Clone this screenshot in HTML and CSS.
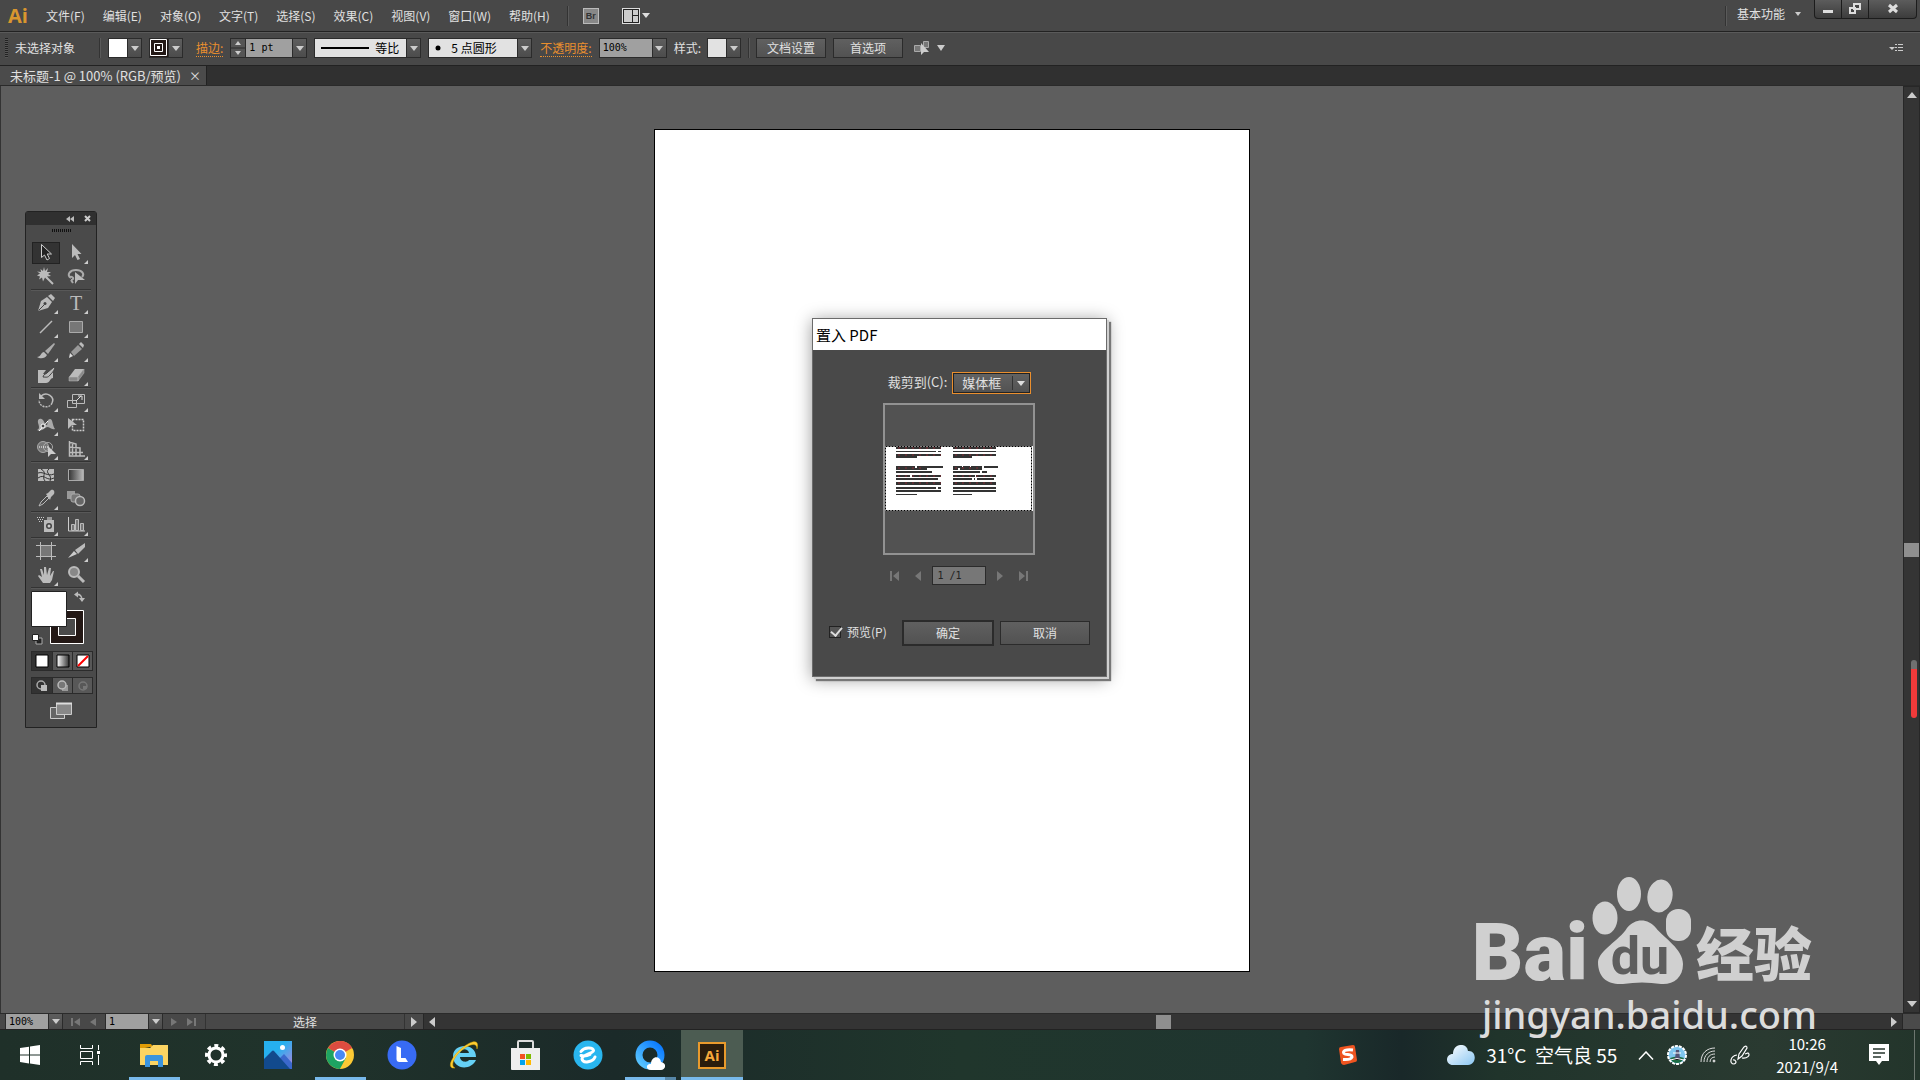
FILE: index.html
```html
<!DOCTYPE html>
<html lang="zh-CN">
<head>
    <meta charset="UTF-8">
    <meta name="viewport" content="width=device-width, initial-scale=1.0">
    <title>未标题-1 @ 100% (RGB/预览)</title>
    <link rel="stylesheet" href="styles.css">
</head>
<body>

    <!-- menu bar -->
    <header class="menubar">
        <span class="ai-logo">Ai</span>
        <nav class="menus">
            <button>文件(F)</button>
            <button>编辑(E)</button>
            <button>对象(O)</button>
            <button>文字(T)</button>
            <button>选择(S)</button>
            <button>效果(C)</button>
            <button>视图(V)</button>
            <button>窗口(W)</button>
            <button>帮助(H)</button>
        </nav>
        <span class="sep"></span>
        <button class="bridge" aria-label="Bridge">Br</button>
        <button class="arrange" aria-label="排列文档">
            <svg width="28" height="16" viewBox="0 0 28 16"><rect x="1" y="1" width="16" height="14" fill="#ccc" stroke="#222"/><path d="M0 .5h18M.5 0v16M17.500 0v16M0 15.500h18" stroke="#ddd"/><path d="M1.500 1.500h15v13h-15zM10.500 1v14M11 7.500h6" fill="none" stroke="#222"/><path d="M20 5h8l-4 5z" fill="#ddd"/></svg>
        </button>
        <span class="sep push"></span>
        <button class="workspace">基本功能 <svg width="6" height="4" viewBox="0 0 6 4"><path d="M0 0h6l-3 4z" fill="#ccc"/></svg></button>
        <div class="window-buttons">
            <button aria-label="最小化"><svg width="12" height="16" viewBox="0 0 12 16"><path d="M1 10h10v3h-10z" fill="#ddd"/></svg></button>
            <button aria-label="还原"><svg width="12" height="16" viewBox="0 0 12 16"><path d="M5 4h6v5h-6z M1 8h5v5h-5z" fill="#444" stroke="#ddd" stroke-width="2"/></svg></button>
            <button class="wide" aria-label="关闭"><svg width="12" height="16" viewBox="0 0 12 16"><path d="M2 5l8 7M10 5l-8 7" stroke="#ddd" stroke-width="3"/></svg></button>
        </div>
    </header>

    <!-- control bar -->
    <section class="controlbar">
        <span class="grip"></span>
        <span class="state">未选择对象</span>
        <span class="sep"></span>
        <div class="combo fill-combo"><span class="swatch white"></span><button class="drop" aria-label="填色"></button></div>
        <div class="combo stroke-combo"><span class="swatch ring"><svg width="17" height="17" viewBox="0 0 17 17"><path d="M.5.5h16v16h-16z" fill="#231815" stroke="#fff"/><path d="M4.500 4.500h8v8h-8z" fill="#231815" stroke="#fff"/><path d="M7 7h3v3h-3z" fill="#fff"/></svg></span><button class="drop" aria-label="描边颜色"></button></div>
        <label class="link" for="weight">描边:</label>
        <div class="combo">
            <button class="spin" aria-label="增减"><svg width="14" height="18" viewBox="0 0 14 18"><path d="M4 6h6l-3-4zM4 12h6l-3 4z" fill="#ccc"/><path d="M0 9h14" stroke="#2b2b2b"/></svg></button>
            <input class="mono weight" id="weight" type="text" value="1 pt">
            <button class="drop" aria-label="描边粗细"></button>
        </div>
        <div class="combo profile"><button class="pick"><svg width="48" height="2" viewBox="0 0 48 2"><path d="M0 1h48" stroke="#000" stroke-width="2"/></svg>等比</button><button class="drop" aria-label="配置文件"></button></div>
        <div class="combo brush"><button class="pick"><svg width="6" height="6" viewBox="0 0 6 6"><circle cx="3" cy="3" r="2.500"/></svg>5 点圆形</button><button class="drop" aria-label="画笔"></button></div>
        <label class="link opacity-label" for="opacity">不透明度:</label>
        <div class="combo"><input class="mono opacity" id="opacity" type="text" value="100%"><button class="drop" aria-label="不透明度"></button></div>
        <span class="style-label">样式:</span>
        <div class="combo"><span class="swatch pale"></span><button class="drop" aria-label="图形样式"></button></div>
        <span class="sep"></span>
        <button class="push-button">文档设置</button>
        <button class="push-button">首选项</button>
        <button class="isolate" aria-label="选择类似的对象">
            <svg width="32" height="16" viewBox="0 0 32 16"><path d="M1.500 5.500h6v6h-6zM10.500 1.500h5v6h-5z" fill="#777" stroke="#aaa"/><path d="M8 3v12l3-3h5z" fill="#ccc"/><path d="M24 5h8l-4 6z" fill="#ccc"/></svg>
        </button>
        <button class="panel-menu" aria-label="面板菜单">
            <svg width="14" height="9" viewBox="0 0 14 9"><path d="M0 3h6l-3 3z" fill="#ccc"/><path d="M6 .5h2M9 .5h5M6 3.500h2M9 3.500h5M6 6.500h2M9 6.500h5" stroke="#ccc"/></svg>
        </button>
    </section>

    <!-- document tabs -->
    <div class="tabs">
        <div class="tab">未标题-1 @ 100% (RGB/预览)<button aria-label="关闭文档">×</button></div>
    </div>

    <!-- document window -->
    <main class="workarea">
        <div class="canvas"><div class="artboard"></div></div>
        <div class="vscroll">
            <svg width="10" height="6" viewBox="0 0 10 6"><path d="M0 6h10l-5-6z" fill="#ccc"/></svg>
            <span class="thumb"></span>
            <svg width="10" height="6" viewBox="0 0 10 6"><path d="M0 0h10l-5 6z" fill="#ccc"/></svg>
        </div>
        <span class="meter"></span>
    </main>

    <!-- status bar -->
    <footer class="statusbar">
        <div class="combo"><input class="mono short" type="text" value="100%" aria-label="缩放"><button class="drop" aria-label="缩放级别"></button></div>
        <div class="pager">
            <svg width="9" height="8" viewBox="0 0 9 8"><path d="M0 0h2v8h-2zM9 0v8l-6-4z" fill="#777"/></svg>
            <svg width="6" height="8" viewBox="0 0 6 8"><path d="M6 0v8l-6-4z" fill="#777"/></svg>
        </div>
        <div class="combo"><input class="mono short" type="text" value="1" aria-label="画板"><button class="drop" aria-label="画板导航"></button></div>
        <div class="pager">
            <svg width="6" height="8" viewBox="0 0 6 8"><path d="M0 0v8l6-4z" fill="#777"/></svg>
            <svg width="9" height="8" viewBox="0 0 9 8"><path d="M7 0h2v8h-2zM0 0v8l6-4z" fill="#777"/></svg>
        </div>
        <span class="status-text">选择</span>
        <button class="status-more" aria-label="显示"><svg width="6" height="10" viewBox="0 0 6 10"><path d="M0 0v10l6-5z" fill="#ccc"/></svg></button>
        <div class="hscroll">
            <svg width="6" height="10" viewBox="0 0 6 10"><path d="M6 0v10l-6-5z" fill="#ccc"/></svg>
            <span class="thumb"></span>
            <svg width="6" height="10" viewBox="0 0 6 10"><path d="M0 0v10l6-5z" fill="#ccc"/></svg>
        </div>
        <span class="corner"></span>
    </footer>

    <!-- floating tools panel -->
    <aside class="tools">
        <div class="tools-head">
            <svg width="8" height="6" viewBox="0 0 8 6"><path d="M4 0v6l-4-3zM8 0v6l-4-3z" fill="#bbb"/></svg>
            <svg width="7" height="7" viewBox="0 0 7 7"><path d="M1 1l5 5M6 1l-5 5" stroke="#ccc" stroke-width="2"/></svg>
        </div>
        <div class="tools-grip"></div>
        <div class="group">
            <button class="active" aria-label="选择工具"><svg viewBox="0 0 20 20"><path d="M5.500 1.500v13l3-2.500 2.500 5 2.500-1.500-2.300-4.500h4.300z" fill="#222" stroke="#ccc"/></svg></button>
            <button class="more" aria-label="直接选择工具"><svg viewBox="0 0 20 20"><path d="M6 1v14l3-3 2.500 5 2.500-1-2.500-5h4z" fill="#bbb"/></svg></button>
            <button aria-label="魔棒工具"><svg viewBox="0 0 20 20"><path d="M8 0l1 4 3-3-1 4h4l-3 2 3 2-4 .5 1 3-3-2-2 4-1-4-3 2 1-3-3-1 3-2-3-2 4 .5-.5-3 2.500 2z" fill="#bbb"/><path d="M10 10l7 7" stroke="#bbb" stroke-width="2"/></svg></button>
            <button aria-label="套索工具"><svg viewBox="0 0 20 20"><path d="M5 11C0 8 4 3 10 3s9 4 6 7M4 10c4-1 4 3 1 3M5 13l2 3" fill="none" stroke="#aaa" stroke-width="2"/><path d="M9 5v12l3-4h7z" fill="#bbb"/></svg></button>
        </div>
        <div class="group">
            <button class="more" aria-label="钢笔工具"><svg viewBox="0 0 20 20"><path d="M2 18L5 8l6-4 5 5-4 6z" fill="#bbb"/><path d="M12 3l3-2 4 4-2 3z" fill="#bbb"/><path d="M2.500 17.500l6-6" stroke="#444"/><circle cx="9" cy="10.500" r="1.500" fill="#444"/></svg></button>
            <button class="more type" aria-label="文字工具">T</button>
            <button class="more" aria-label="直线段工具"><svg viewBox="0 0 20 20"><path d="M4 16L16 4" stroke="#bbb" stroke-width="1.500"/></svg></button>
            <button class="more" aria-label="矩形工具"><svg viewBox="0 0 20 20"><path d="M3.500 4.500h13v11h-13z" fill="#777" stroke="#aaa"/></svg></button>
            <button class="more" aria-label="画笔工具"><svg viewBox="0 0 20 20"><path d="M1 16c4 0 4-5 7-5l3 3c-2 4-7 4-10 2z" fill="#bbb"/><path d="M9 10L18 2l1 1-7 10z" fill="#aaa"/></svg></button>
            <button class="more" aria-label="铅笔工具"><svg viewBox="0 0 20 20"><path d="M3 17l1-5 3 3z" fill="#ddd"/><path d="M5 11l7-7 4 4-8 7z" fill="#999"/><path d="M13 3l2-2 3 3-1 3z" fill="#bbb"/></svg></button>
            <button aria-label="斑点画笔工具"><svg viewBox="0 0 20 20"><path d="M2 5h8l-3 4H2zM2 9h7c3 3 5 1 8-2v6c-3 0-3 5-7 5H2z" fill="#bbb"/><path d="M7 12c0-3 4-3 5-5l6-5c2 1-1 5-4 8-2 3-4 2-7 2z" fill="#bbb" stroke="#444"/></svg></button>
            <button class="more" aria-label="橡皮擦工具"><svg viewBox="0 0 20 20"><path d="M9 4h9l-6 8H3z" fill="#bbb"/><path d="M3 12h9v4H3zM12 12l6-8v4l-6 8z" fill="#888" stroke="#bbb" stroke-width=".5"/></svg></button>
        </div>
        <div class="group">
            <button class="more" aria-label="旋转工具"><svg viewBox="0 0 20 20"><path d="M5 5c6-5 14 1 11 7" fill="none" stroke="#bbb" stroke-width="1.500"/><path d="M16 12c-2 6-13 5-13-3" fill="none" stroke="#bbb" stroke-width="1.500" stroke-dasharray="2 1"/><path d="M3 2v6h6z" fill="#bbb"/></svg></button>
            <button class="more" aria-label="比例缩放工具"><svg viewBox="0 0 20 20"><path d="M6.500 3.500h12v9h-12zM1.500 9.500h9v7h-9z" fill="none" stroke="#bbb"/><path d="M10 10l5-5M12 5h4v4" fill="none" stroke="#ddd"/></svg></button>
            <button class="more" aria-label="宽度工具"><svg viewBox="0 0 20 20"><path d="M1 15c3-1 2-4 1-7-1-5 3-5 5-3 2 3 2 5 4 5 1-2 0-6 3-6s2 6 5 10c-4 1-5-2-8-2-4 2-6 5-10 3z" fill="#aaa"/><path d="M3 16L12 6" stroke="#fff"/><circle cx="7" cy="11" r="2" fill="#444" stroke="#fff"/></svg></button>
            <button aria-label="自由变换工具"><svg viewBox="0 0 20 20"><path d="M6.500 4.500h11v11h-11z" fill="none" stroke="#ccc" stroke-width="1.500" stroke-dasharray="2 1"/><path d="M2 3v11l4-4h5z" fill="#bbb"/></svg></button>
            <button class="more" aria-label="形状生成器工具"><svg viewBox="0 0 20 20"><circle cx="7" cy="8" r="5.500" fill="#777" stroke="#aaa"/><circle cx="12" cy="8" r="4.500" fill="none" stroke="#aaa"/><path d="M3 8h10" stroke="#fff" stroke-dasharray="1 1"/><path d="M12 7v11l3-3h5z" fill="#ccc"/></svg></button>
            <button class="more" aria-label="透视网格工具"><svg viewBox="0 0 20 20"><path d="M3.500 2v15H19M3 3l7 2v12M6.500 4v12M3 8l11 1v8M3 13.500h14" fill="none" stroke="#bbb" stroke-width="1.500"/></svg></button>
        </div>
        <div class="group">
            <button aria-label="网格工具"><svg viewBox="0 0 20 20"><path d="M2 4h16v12H2z" fill="#bbb"/><path d="M2 8c6-2 9 4 16 1M2 13c7-5 8 4 16 0M5 4c7 4 0 7 4 12M13 4c-5 4 4 6 1 12" fill="none" stroke="#333"/></svg></button>
            <button aria-label="渐变工具"><svg viewBox="0 0 20 20"><defs><linearGradient id="g1"><stop stop-color="#333"/><stop offset="1" stop-color="#bbb"/></linearGradient></defs><path d="M2.500 4.500h15v11h-15z" fill="url(#g1)" stroke="#aaa"/></svg></button>
            <button class="more" aria-label="吸管工具"><svg viewBox="0 0 20 20"><path d="M3 17l2-4 6-6 2 2-6 6z" fill="none" stroke="#bbb"/><path d="M10 5l2-1 3-3c3-1 4 2 3 4l-3 3-1 3z" fill="#bbb"/></svg></button>
            <button aria-label="混合工具"><svg viewBox="0 0 20 20"><path d="M1 2h8v8H1z" fill="#999"/><rect x="5" y="5" width="9" height="8" rx="2" fill="#777" stroke="#aaa"/><circle cx="14" cy="12" r="4.500" fill="#666" stroke="#bbb" stroke-width="1.500"/></svg></button>
        </div>
        <div class="group">
            <button class="more" aria-label="符号喷枪工具"><svg viewBox="0 0 20 20"><path d="M8 5h10v12H8z" fill="#bbb"/><path d="M11 2h5v3h-5z" fill="#999"/><circle cx="13" cy="11" r="3" fill="#444"/><circle cx="13" cy="11" r="1.500" fill="#ccc"/><path d="M1 2.500h8M2 4.500h6M3 6.500h4" stroke="#ccc" stroke-dasharray="1 1"/></svg></button>
            <button class="more" aria-label="柱形图工具"><svg viewBox="0 0 20 20"><path d="M2.500 2v14H19" fill="none" stroke="#ccc"/><path d="M5.500 9.500h3v6h-3zM9.500 4.500h3v11h-3zM14.500 8.500h3v7h-3z" fill="#777" stroke="#bbb"/></svg></button>
        </div>
        <div class="group">
            <button aria-label="画板工具"><svg viewBox="0 0 20 20"><path d="M4 4h12v12H4z" fill="#777"/><path d="M4.500 1v18M15.500 1v18M0 4.500h20M0 15.500h20" stroke="#bbb" stroke-dasharray="6 8"/><path d="M4.500 4.500h11v11h-11z" fill="none" stroke="#bbb"/></svg></button>
            <button class="more" aria-label="切片工具"><svg viewBox="0 0 20 20"><path d="M2 17l6-7 3 3z" fill="#ccc"/><path d="M9 9l10-7v4l-7 7z" fill="#bbb"/></svg></button>
            <button class="more" aria-label="抓手工具"><svg viewBox="0 0 20 20"><path d="M7 18L2 11l1-1 3 2-2-8h2l2 6V2h2l1 8 2-7h2l-1 8 3-5h1l-2 9-2 3z" fill="#bbb"/></svg></button>
            <button aria-label="缩放工具"><svg viewBox="0 0 20 20"><circle cx="8" cy="7" r="5" fill="#888" stroke="#bbb" stroke-width="2"/><path d="M12 11l6 6" stroke="#bbb" stroke-width="3"/></svg></button>
        </div>
        <div class="paint">
            <svg width="62" height="58" viewBox="0 0 62 58"><path d="M19.500 21.500h33v33h-33z" fill="#231815" stroke="#fff"/><path d="M27.500 29.500h17v17h-17z" fill="#4a4a4a" stroke="#fff"/><path d="M.5 2.500h35v35h-35z" fill="#fff" stroke="#222"/><path d="M45 5.500q6-1 6 6" fill="none" stroke="#bbb" stroke-width="1.500"/><path d="M43 5.500l4-3v6zM48 9h6l-3 4z" fill="#bbb"/><path d="M5 49h6v6H5z" fill="#222" stroke="#aaa"/><path d="M1.500 45.500h6v6h-6z" fill="#fff" stroke="#222"/></svg>
        </div>
        <div class="modes">
            <button class="on" aria-label="颜色"><svg width="14" height="14" viewBox="0 0 14 14"><path d="M1 1h12v12H1z" fill="#fff" stroke="#000"/></svg></button>
            <button aria-label="渐变"><svg width="14" height="14" viewBox="0 0 14 14"><defs><linearGradient id="g2"><stop stop-color="#fff"/><stop offset="1" stop-color="#333"/></linearGradient></defs><path d="M1 1h12v12H1z" fill="url(#g2)" stroke="#000"/></svg></button>
            <button aria-label="无"><svg width="14" height="14" viewBox="0 0 14 14"><path d="M1 1h12v12H1z" fill="#fff" stroke="#000"/><path d="M2 12L12 2" stroke="#f00" stroke-width="2"/></svg></button>
        </div>
        <div class="modes draw">
            <button class="on" aria-label="正常绘图"><svg width="14" height="12" viewBox="0 0 14 12"><circle cx="6" cy="5" r="4" fill="none" stroke="#aaa" stroke-width="1.500"/><path d="M6 5h6v6H6z" fill="#bbb"/></svg></button>
            <button aria-label="背面绘图"><svg width="14" height="12" viewBox="0 0 14 12"><path d="M6 5h6v6H6z" fill="#999"/><circle cx="6" cy="5" r="4" fill="#777" stroke="#bbb" stroke-width="1.500"/></svg></button>
            <button aria-label="内部绘图" disabled><svg width="14" height="12" viewBox="0 0 14 12"><circle cx="7" cy="6" r="4" fill="none" stroke="#777" stroke-width="1.500"/><path d="M7 6h4v3H7z" fill="#777"/></svg></button>
        </div>
        <button class="screen-mode" aria-label="更改屏幕模式"><svg width="22" height="18" viewBox="0 0 22 18"><path d="M.5 5.500h14v11H.5z" fill="#666" stroke="#ccc"/><path d="M6.500 1.500h15v11h-15z" fill="#888" stroke="#ccc"/><path d="M6 1.500h16" stroke="#ddd" stroke-width="2"/></svg></button>
    </aside>

    <!-- place pdf dialog -->
    <form class="dialog" role="dialog" aria-label="置入 PDF">
        <h1>置入 PDF</h1>
        <div class="dialog-body">
            <div class="crop-row">
                <label for="crop">裁剪到(C):</label>
                <span class="select-box"><select id="crop"><option>媒体框</option></select></span>
            </div>
            <div class="preview">
                <svg width="148" height="65" viewBox="0 0 148 65">
                    <path d="M0 0h148v65H0z" fill="#fff"/>
                    <g fill="none" stroke="#333" stroke-width="2">
                        <path d="M11 2h45M11 9h45M11 11h21M11 21h19M32 21h26M11 23h31M11 26h36M11 30h14M27 30h29M11 33h42M11 37h45M11 38h45M11 42h40M53 42h3M11 45h45"/>
                        <path d="M68 2h43M68 9h43M68 11h19M68 21h9M78 21h7M86 21h11M99 21h14M68 23h5M75 23h22M68 26h27M97 26h5M68 30h22M92 30h19M68 33h19M89 33h1M92 33h17M68 37h43M68 38h43M68 42h43M68 45h43"/>
                        <path stroke-width="1" d="M11 5.500h40M53 5.500h3M11 48.500h21M68 5.500h43M68 48.500h19"/>
                        <path stroke="#5c2f33" stroke-dasharray="2 5" d="M13 2h43M13 9h43M13 22h28M13 30h43M13 37h43M70 2h41M70 9h41M70 22h26M70 30h41M70 37h41"/>
                    </g>
                    <path d="M.5.5h146v64H.5z" fill="none" stroke="#000" stroke-dasharray="2 1"/>
                </svg>
            </div>
            <div class="page-row">
                <button type="button" disabled aria-label="第一页"><svg width="9" height="10" viewBox="0 0 9 10"><path d="M0 0h2v10H0zM9 0v10L3 5z" fill="#777"/></svg></button>
                <button type="button" disabled aria-label="上一页"><svg width="9" height="10" viewBox="0 0 9 10"><path d="M8 0v10L2 5z" fill="#777"/></svg></button>
                <input class="mono" type="text" value="1 /1" disabled aria-label="页码">
                <button type="button" disabled aria-label="下一页"><svg width="9" height="10" viewBox="0 0 9 10"><path d="M1 0v10l6-5z" fill="#777"/></svg></button>
                <button type="button" disabled aria-label="最后一页"><svg width="9" height="10" viewBox="0 0 9 10"><path d="M7 0h2v10H7zM0 0v10l6-5z" fill="#777"/></svg></button>
            </div>
            <div class="action-row">
                <label><input type="checkbox" checked>预览(P)</label>
                <button type="button" class="ok">确定</button>
                <button type="button">取消</button>
            </div>
        </div>
    </form>

    <!-- windows taskbar -->
    <div class="taskbar">
        <button class="start" aria-label="开始"><svg width="20" height="20" viewBox="0 0 20 20"><path d="M0 3l9-1.300V9.500H0zM10 1.500L20 0v9.500H10zM0 10.500h9v8L0 17zM10 10.500h10V20l-10-1.500z" fill="#fff"/></svg></button>
        <button class="start" aria-label="任务视图"><svg width="20" height="20" viewBox="0 0 20 20" fill="none" stroke="#fff"><path d="M.5 0v3.500h12V0M.5 20v-3.500h12V20M.5 6.500h12v7H.5zM18.500 0v5M18.500 10v10"/><path d="M17 6h3v3h-3z" fill="#fff" stroke="none"/></svg></button>
        <div class="apps">
            <button class="running" aria-label="文件资源管理器"><svg width="28" height="24" viewBox="0 0 28 24"><path d="M0 1h11l2 3h-3L0 6z" fill="#e09b05"/><path d="M0 5h10l3-3h15v20H0z" fill="#fcd462"/><path d="M5 14q0-2 2-2h14q2 0 2 2v10h-5v-6h-8v6H5z" fill="#3b94de"/></svg></button>
            <button aria-label="设置"><svg width="24" height="24" viewBox="0 0 24 24"><circle cx="12" cy="12" r="7" fill="none" stroke="#fff" stroke-width="3"/><circle cx="12" cy="12" r="9.500" fill="none" stroke="#fff" stroke-width="3" stroke-dasharray="4 3.460" stroke-dashoffset="2"/></svg></button>
            <button aria-label="照片"><svg width="28" height="28" viewBox="0 0 28 28"><defs><linearGradient id="sky" x2="1" y2="1"><stop offset=".4" stop-color="#26b0ef"/><stop offset="1" stop-color="#b682dd"/></linearGradient></defs><path d="M0 0h28v28H0z" fill="url(#sky)"/><path d="M11 22l9-9 8 9v6H11z" fill="#3b68cc"/><path d="M0 18l8-8q1-1 2 0l16 18H0z" fill="#124a8d"/><circle cx="18.500" cy="6.500" r="2.500" fill="#fff"/></svg></button>
            <button class="running" aria-label="Chrome"><svg width="28" height="28" viewBox="0 0 28 28"><circle cx="14" cy="14" r="14" fill="#fcc934"/><path d="M14 14L1.900 7a14 14 0 0 1 24.200 0z" fill="#dc4c40"/><path d="M14 14L1.900 7a14 14 0 0 0 12 21l6-11z" fill="#1ea362"/><path d="M14 7h12.100a14 14 0 0 0-12-7z" fill="#dc4c40"/><circle cx="14" cy="14" r="6.500" fill="#fff"/><circle cx="14" cy="14" r="5" fill="#4989f5"/></svg></button>
            <button aria-label="L"><svg width="30" height="30" viewBox="0 0 30 30"><circle cx="15" cy="15" r="14.500" fill="#386bf4"/><path d="M9.500 6v13q0 3 3 3H21L18.500 18H14V8z" fill="#fff"/></svg></button>
            <button aria-label="Internet Explorer"><svg width="30" height="30" viewBox="0 0 30 30"><path d="M27 17H11c0 5 7 6 9 3h7c-5 11-23 10-23-4 0-13 23-14 23 1zM11 13h9c-1-5-8-5-9 0z" fill="#65d1f6"/><path d="M6 28C-4 29 4 15 13 8S31-2 28 9C28 1 19 5 12 11S1 26 6 28z" fill="#fc3" stroke="#dba900" stroke-width=".5"/></svg></button>
            <button aria-label="Microsoft Store"><svg width="30" height="30" viewBox="0 0 30 30"><path d="M7 9V2q0-1 1-1h13q1 0 1 1v7" fill="none" stroke="#ddd" stroke-width="2"/><path d="M0 8h29v22H1q-1 0-1-1z" fill="#eee"/><path d="M9 14h5v5H9z" fill="#f25022"/><path d="M15 14h5v5h-5z" fill="#7fba00"/><path d="M9 20h5v5H9z" fill="#00a4ef"/><path d="M15 20h5v5h-5z" fill="#ffb900"/></svg></button>
            <button aria-label="浏览器"><svg width="30" height="30" viewBox="0 0 30 30"><circle cx="15" cy="15" r="14.500" fill="#29b6ef"/><path d="M8 11.500C11 7 20 7 20.500 10.500 20 14 9 14 9 19c1 5 11 3 13-2M8 15.500c3 1 7 0 9-1" fill="none" stroke="#fff" stroke-width="3" stroke-linecap="round"/></svg></button>
            <button class="running stacked" aria-label="QQ浏览器"><svg width="30" height="30" viewBox="0 0 30 30"><defs><linearGradient id="qb" x1="1" x2="0" y2="1"><stop stop-color="#0878ff"/><stop offset="1" stop-color="#5cc8ff"/></linearGradient></defs><circle cx="15" cy="15" r="11" fill="none" stroke="url(#qb)" stroke-width="7"/><path d="M16 30c-6 0-5-7 0-6 0-8 9-9 10-2 6 1 5 8 0 8z" fill="#fff"/></svg></button>
            <button class="running current" aria-label="Illustrator"><span class="ai-tile">Ai</span></button>
        </div>
        <svg class="sogou" width="20" height="20" viewBox="0 0 20 20"><path d="M1 4q0-2 2-2L15 0q2 0 2 2l2 13q0 2-2 2L6 20q-2 0-3-2z" fill="#ef5420"/><path d="M15 5C8 4 4 6 6 8.500c2 2 8 0 8 3.500q-1 3-9 2.500" fill="none" stroke="#fff" stroke-width="3"/></svg>
        <a class="weather" href="#"><svg width="28" height="20" viewBox="0 0 28 20"><defs><linearGradient id="cl" x2="1" y2="1"><stop stop-color="#fff"/><stop offset="1" stop-color="#8bc7f2"/></linearGradient></defs><path d="M6 20C-2 20-2 9 6 9 6-2 20-3 21 6c9-1 9 14 0 14z" fill="url(#cl)"/></svg>31°C&nbsp; 空气良 55</a>
        <div class="tray">
            <svg width="16" height="9" viewBox="0 0 16 9"><path d="M1 8.500L8 1l7 7.500" fill="none" stroke="#fff" stroke-width="1.500"/></svg>
            <svg width="20" height="20" viewBox="0 0 20 20"><circle cx="10" cy="10" r="9" fill="#7fc6ef" stroke="#fff" stroke-width="2" stroke-dasharray="3 1"/><path d="M3 13q7-3 14 0-2 5-7 5t-7-5z" fill="#1c6c45"/><path d="M8 14l1-9h3l1 9z" fill="#557"/><path d="M6 8h8M3 15q7-3 14 0" stroke="#fff"/></svg>
            <svg width="16" height="16" viewBox="0 0 16 16" fill="none" stroke="#ddd"><path d="M1 15C1 6 7 1 15 1M4 15c0-7 5-11 11-11M7 15c0-5 3-8 8-8M10 15c0-3 2-5 5-5"/><circle cx="14" cy="14" r="1" fill="#ddd"/></svg>
            <svg width="22" height="22" viewBox="0 0 22 22" fill="none" stroke="#fff" stroke-width="1.200"><path d="M9 15l1-5 5-7q3-2 3 1l-5 8zM8 11c-7 1-8 9-3 9 4-1 1-5-1-4M13 14c5 1 9-3 6-5l-3 1"/></svg>
        </div>
        <div class="clock"><time>10:26</time><time>2021/9/4</time></div>
        <svg class="notice" width="20" height="22" viewBox="0 0 20 22"><path d="M0 0h20v17h-7l-3 4-3-4H0z" fill="#fff"/><path d="M4 5h12M4 9h12M4 13h8" stroke="#26352d" stroke-width="1.500"/></svg>
        <span class="show-desktop"></span>
    </div>

    <!-- watermark over the corner -->
    <div class="watermark">
        <div class="mark">
            <span class="latin">Bai</span>
            <svg width="104" height="110" viewBox="0 0 104 110" fill="#d0d0d0"><ellipse cx="15" cy="42" rx="12.500" ry="16.500"/><ellipse cx="39" cy="18" rx="12" ry="17"/><ellipse cx="70" cy="20" rx="12.500" ry="16.500" transform="rotate(10 70 20)"/><rect x="76" y="33" width="25" height="32" rx="12"/><path d="M37 52C45 42 58 42 66 52C74 62 93 73 93 88C93 102 83 109 71 108Q52 105 33 108C18 109 8 102 8 86C9 74 29 65 37 52z"/><text x="50" y="98" text-anchor="middle" class="du">du</text></svg>
            <span class="hanzi">经验</span>
        </div>
        <span class="url">jingyan.baidu.com</span>
    </div>

</body>
</html>
```

FILE: styles.css
```css
* {
    box-sizing: border-box;
}

body {
    margin: 0;
    height: 100vh;
    display: flex;
    flex-direction: column;
    overflow: hidden;
    position: relative;
    background: #484848;
    color: #e0e0e0;
    font: 12px/16px "Noto Sans CJK SC", sans-serif;
}

svg {
    display: block;
    flex: none;
}

button,
input,
select {
    margin: 0;
    padding: 0;
    border: 0;
    background: none;
    color: inherit;
    font: inherit;
}

.sep {
    width: 2px;
    height: 20px;
    background: #333;
    border-right: 1px solid #5a5a5a;
}

/* menu bar */
.menubar {
    display: flex;
    align-items: center;
    height: 32px;
    flex: none;
    border-bottom: 1px solid #222;
}

.ai-logo {
    width: 37px;
    padding-left: 8px;
    color: #d9962f;
    font: bold 20px/28px "Open Sans", sans-serif;
}

.menus {
    display: flex;
}

.menus button {
    padding: 0 9px;
}

.menubar > .sep {
    margin-left: 8px;
}

.bridge {
    width: 16px;
    height: 16px;
    margin: 0 23px 0 14px;
    border: 1px solid #bbb;
    background: #888;
    color: #333;
    font: bold 9px/12px "Liberation Sans", sans-serif;
}

.menubar > .push {
    margin-left: auto;
}

.workspace {
    display: flex;
    align-items: center;
    gap: 10px;
    margin: 0 13px 4px 10px;
}

.window-buttons {
    display: flex;
    align-self: flex-start;
    height: 19px;
    margin-right: 3px;
    border: 1px solid #1c1c1c;
    border-top: 0;
    border-radius: 0 0 4px 4px;
    background: linear-gradient(#5c5c5c, #3c3c3c);
}

.window-buttons button {
    width: 27px;
    display: flex;
    justify-content: center;
    border-right: 1px solid #1c1c1c;
}

.window-buttons .wide {
    width: 47px;
    border: 0;
}

/* control bar */
.controlbar {
    display: flex;
    align-items: center;
    height: 34px;
    flex: none;
    padding: 0 0 2px 5px;
    border-top: 1px solid #5a5a5a;
    border-bottom: 1px solid #222;
}

.grip {
    width: 3px;
    height: 20px;
    background: repeating-linear-gradient(#222 0 1px, #555 1px 2px);
}

.state {
    margin: 0 24px 0 7px;
}

.combo {
    display: flex;
    height: 20px;
    border: 1px solid #2b2b2b;
    background: #a0a0a0;
}

.fill-combo {
    margin: 0 7px;
}

.stroke-combo {
    margin-right: 13px;
}

.swatch {
    width: 18px;
}

.white {
    background: #fff;
}

.ring {
    background: #231815;
}

.pale {
    background: #e2e2e2;
}

.drop {
    width: 14px;
    display: flex;
    align-items: center;
    justify-content: center;
    border-left: 1px solid #2b2b2b;
    background: linear-gradient(#5e5e5e, #4c4c4c);
}

.drop::before {
    content: "";
    border: 4px solid transparent;
    border-top: 5px solid #ccc;
    border-bottom: 0;
}

.spin {
    width: 15px;
    border-right: 1px solid #2b2b2b;
    background: #555;
}

.link {
    margin-right: 7px;
    color: #ea8f2e;
    border-bottom: 1px dotted #ea8f2e;
    line-height: 16px;
}

.mono {
    padding-left: 3px;
    color: #000;
    font: 10px/16px "DejaVu Sans Mono", monospace;
}

.weight {
    width: 46px;
}

.profile {
    margin: 0 7px;
}

.pick {
    display: flex;
    align-items: center;
    justify-content: flex-end;
    gap: 6px;
    width: 91px;
    padding-right: 7px;
    background: #e2e2e2;
    color: #000;
}

.brush .pick {
    width: 88px;
    gap: 10px;
    padding: 0 0 0 6px;
    justify-content: flex-start;
}

.opacity-label {
    margin-left: 8px;
}

.opacity {
    width: 52px;
}

.style-label {
    margin: 0 6px 0 7px;
}

.combo + .sep {
    margin: 0 6px 0 7px;
}

.push-button {
    width: 70px;
    height: 20px;
    margin-right: 7px;
    border: 1px solid #2b2b2b;
    background: linear-gradient(#606060, #525252);
    line-height: 16px;
}

.isolate {
    margin-left: 3px;
}

.panel-menu {
    margin: 0 17px 0 auto;
}

/* document tabs */
.tabs {
    display: flex;
    height: 20px;
    flex: none;
    background: #303030;
    border-bottom: 1px solid #2a2a2a;
}

.tab {
    display: flex;
    align-items: center;
    gap: 8px;
    padding: 0 5px 0 10px;
    background: #4b4b4b;
    border-right: 1px solid #222;
    font-size: 13px;
    line-height: 19px;
}

.tab button {
    font-size: 12px;
}

/* document window */
.workarea {
    flex: 1;
    display: flex;
    min-height: 0;
    position: relative;
}

.canvas {
    flex: 1;
    display: flex;
    align-items: center;
    justify-content: center;
    padding-top: 2px;
    background: #5e5e5e;
    border-left: 1px solid #333;
}

.artboard {
    width: 596px;
    height: 843px;
    border: 1px solid #000;
    background: #fff;
}

.vscroll,
.hscroll {
    display: flex;
    align-items: center;
    justify-content: space-between;
    background: #343434;
    border: 1px solid #272727;
}

.vscroll {
    flex-direction: column;
    width: 17px;
    padding: 5px 0;
}

.thumb {
    width: 15px;
    height: 14px;
    background: #8f8f8f;
}

.meter {
    position: absolute;
    right: 3px;
    top: 574px;
    width: 6px;
    height: 58px;
    border-radius: 3px;
    background: linear-gradient(#707070 9px, #f03a3a 9px);
}

/* status bar */
.statusbar {
    display: flex;
    height: 17px;
    flex: none;
    padding-left: 5px;
    border-top: 1px solid #2b2b2b;
    border-bottom: 1px solid #222;
}

.statusbar .combo {
    height: 15px;
    border-width: 0 1px;
}

.statusbar .mono {
    width: 42px;
    line-height: 15px;
}

.pager {
    display: flex;
    align-items: center;
    gap: 10px;
    width: 42px;
    padding-left: 8px;
}

.status-text {
    width: 200px;
    border: 1px solid #333;
    border-width: 0 1px;
    text-align: center;
    line-height: 16px;
}

.status-more {
    width: 18px;
    padding-left: 6px;
}

.hscroll {
    flex: 1;
    padding: 0 5px;
    border-width: 0 1px;
}

.corner {
    width: 17px;
    background: #4a4a4a;
}

/* tools panel */
.tools {
    position: absolute;
    left: 25px;
    top: 211px;
    width: 72px;
    border: 1px solid #222;
    border-radius: 3px 3px 0 0;
    background: #4a4a4a;
    padding-bottom: 7px;
    display: flex;
    flex-direction: column;
    align-items: center;
}

.tools-head {
    width: 100%;
    height: 13px;
    display: flex;
    align-items: center;
    justify-content: flex-end;
    gap: 10px;
    padding-right: 5px;
    background: #303030;
}

.tools-grip {
    width: 19px;
    height: 3px;
    margin: 4px 0 9px;
    background: repeating-linear-gradient(90deg, #111 0 1px, #4a4a4a 1px 2px);
}

.group {
    display: grid;
    grid-template-columns: 30px 30px;
    grid-auto-rows: 24px;
    border-bottom: 1px solid #333;
    box-shadow: 0 1px #585858;
    margin-bottom: 1px;
}

.group button {
    position: relative;
    display: flex;
    align-items: center;
    justify-content: center;
}

.group svg {
    width: 20px;
    height: 20px;
}

.group .active {
    margin: 1px;
    border: 1px solid #222;
    background: #333;
}

.group .more::after {
    content: "";
    position: absolute;
    right: 3px;
    bottom: 1px;
    border: 2px solid transparent;
    border-right-color: #ccc;
    border-bottom-color: #ccc;
}

.group .type {
    color: #bbb;
    font: 20px/20px "Liberation Serif", serif;
}

.paint {
    width: 62px;
    padding-left: 1px;
    margin-bottom: 4px;
}

.modes {
    display: flex;
    border: 1px solid #2b2b2b;
    margin: 0 0 6px 2px;
}

.modes button {
    width: 20px;
    height: 18px;
    display: flex;
    align-items: center;
    justify-content: center;
    background: #585858;
}

.modes button + button {
    border-left: 1px solid #2b2b2b;
}

.modes .on {
    background: #333;
}

.draw {
    margin-bottom: 8px;
}

.draw button {
    height: 15px;
}

/* place pdf dialog */
.dialog {
    position: absolute;
    top: 318px;
    left: calc(50% - 148px);
    width: 295px;
    border: 1px solid #6b6b6b;
    background: #494949;
    box-shadow: 2px 2px #d0d0d0, 4px 4px 1px #777, 0 2px 16px rgba(0, 0, 0, 0.4);
}

.dialog h1 {
    margin: 0;
    padding-left: 3px;
    background: #fff;
    color: #000;
    font-size: 15px;
    font-weight: normal;
    line-height: 31px;
}

.dialog-body {
    display: flex;
    flex-direction: column;
    align-items: center;
    padding: 22px 16px 30px;
}

.crop-row {
    display: flex;
    align-items: center;
    gap: 5px;
    font-size: 13px;
}

.crop-row label {
    line-height: 14px;
    padding-bottom: 2px;
}

.select-box {
    position: relative;
    border: 1px solid #ea8f2e;
}

.select-box select {
    appearance: none;
    display: block;
    width: 77px;
    height: 20px;
    padding-left: 8px;
    border: 1px solid #222;
    background: linear-gradient(#626262, #525252);
    outline: 0;
}

.select-box::after {
    content: "";
    position: absolute;
    right: 5px;
    top: 8px;
    border: 4px solid transparent;
    border-top: 5px solid #ddd;
    border-bottom: 0;
    pointer-events: none;
}

.select-box::before {
    content: "";
    position: absolute;
    right: 17px;
    top: 3px;
    height: 14px;
    border-left: 1px solid #333;
    pointer-events: none;
}

.preview {
    display: flex;
    align-items: center;
    width: 152px;
    height: 152px;
    margin: 9px 2px 11px 0;
    padding-bottom: 2px;
    border: 2px solid #929292;
    background: #525252;
}

.page-row {
    display: flex;
    align-items: center;
    gap: 14px;
    margin-right: 2px;
}

.page-row .mono {
    width: 54px;
    height: 19px;
    padding-left: 5px;
    margin: 0 -4px;
    border: 1px solid #2b2b2b;
    background: #777;
    color: #222;
}

.action-row {
    display: flex;
    align-items: center;
    gap: 6px;
    align-self: stretch;
    margin-top: 35px;
}

.action-row label {
    display: flex;
    align-items: center;
    gap: 6px;
    margin-right: auto;
    padding-bottom: 2px;
}

.action-row input {
    appearance: none;
    width: 12px;
    height: 12px;
    border: 1px solid #222;
    background: #555;
}

.action-row input:checked::before {
    content: "";
    display: block;
    width: 5px;
    height: 9px;
    margin: -2px 0 0 3px;
    border: solid #ddd;
    border-width: 0 2px 2px 0;
    transform: rotate(40deg);
}

.action-row button {
    width: 90px;
    height: 24px;
    border: 1px solid #2b2b2b;
    background: linear-gradient(#606060, #525252);
}

.action-row .ok {
    width: 92px;
    height: 26px;
    border-width: 2px;
}

/* windows taskbar */
.taskbar {
    display: flex;
    align-items: center;
    height: 50px;
    flex: none;
    background: linear-gradient(90deg, #1f3029, #20332b 15%, #1b2a29 32%, #20362c 50%, #1f3530 68%, #192829 73%, #20342b 78%, #2a3a31 92%, #23352b);
    color: #fff;
}

.start {
    display: flex;
    justify-content: center;
    width: 60px;
}

.apps {
    display: flex;
    align-self: stretch;
    margin-left: 3px;
}

.apps button {
    display: flex;
    align-items: center;
    justify-content: center;
    width: 62px;
    padding-top: 3px;
    border-bottom: 3px solid transparent;
}

.apps .running {
    background: linear-gradient(#78b9eb, #78b9eb) no-repeat 6px 100% / 51px 3px border-box;
}

.apps .stacked {
    background: linear-gradient(90deg, #78b9eb 40px, #5787a8 40px) no-repeat 6px 100% / 51px 3px border-box;
}

.apps .current {
    background: #4c5c52;
    border-bottom-color: #78b9eb;
}

.ai-tile {
    width: 28px;
    height: 27px;
    border: 2px solid #e99a2c;
    background: #2a1c0c;
    color: #f7a93b;
    font: bold 15px/23px "Open Sans", sans-serif;
}

.sogou {
    margin: 0 89px 0 auto;
}

.weather {
    display: flex;
    align-items: center;
    gap: 11px;
    color: #fff;
    font-size: 19px;
    line-height: 24px;
    text-decoration: none;
}

.tray {
    display: flex;
    align-items: center;
    gap: 13px;
    margin: 0 25px 0 21px;
}

.clock {
    display: flex;
    flex-direction: column;
    align-items: center;
    font-size: 15px;
    line-height: 23px;
}

.notice {
    margin: 0 25px 0 31px;
}

.show-desktop {
    align-self: stretch;
    width: 6px;
    border-left: 1px solid #6c766f;
}

/* watermark */
.watermark {
    position: absolute;
    right: 103px;
    bottom: 40px;
    display: flex;
    flex-direction: column;
    align-items: flex-end;
    color: #d0d0d0;
    pointer-events: none;
}

.mark {
    display: flex;
    align-items: flex-end;
    gap: 2px;
    margin: 0 5px 2px 0;
}

.latin {
    font: 900 80px/66px Roboto, sans-serif;
}

.du {
    fill: #5e5e5e;
    font: bold 52px Roboto, sans-serif;
}

.hanzi {
    font-size: 58px;
    font-weight: 900;
    line-height: 70px;
}

.url {
    font: 500 38px/52px "Noto Sans", sans-serif;
    color: #dcdcdc;
}
```
